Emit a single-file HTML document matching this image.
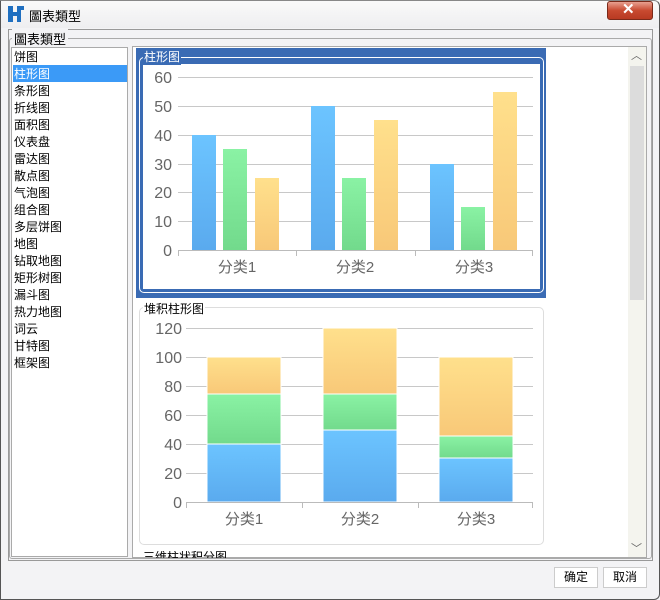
<!DOCTYPE html>
<html><head><meta charset="utf-8"><style>
*{margin:0;padding:0;box-sizing:border-box}
body{width:660px;height:600px;overflow:hidden;background:#f3f3f5;font-family:"Liberation Sans","Noto Sans CJK SC",sans-serif;font-size:12px;color:#000;position:relative}
.a{position:absolute}
.li{position:absolute;left:14px;font-size:12px;line-height:17px}
</style></head><body>
<div class="a" style="left:0;top:0;width:660px;height:28px;background:linear-gradient(#fafafa,#eeeef0)"></div>
<div class="a" style="left:0;top:0;width:660px;height:600px;border:1px solid #555;border-top-color:#888;border-radius:0 6px 6px 0"></div>
<svg class="a" style="left:7px;top:5px" width="18" height="18"><path d="M1 1h5v16h-5z M6 7h4v4h-4z M10 1h7v4h-3v12h-4z" fill="#1f6fc0"/></svg>
<div class="a" style="left:29px;top:6px;font-size:13px">圖表類型</div>
<div class="a" style="left:607px;top:1px;width:46px;height:19px;border-radius:3px;background:linear-gradient(#e8a090,#c84a30 50%,#b83a22);border:1px solid #7a2a1a"></div>
<div class="a" style="left:622px;top:0px;color:#fff;font-size:15px;font-weight:bold">✕</div>
<div class="a" style="left:8px;top:29px;width:645px;height:532px;border:1px solid #999"></div>
<div class="a" style="left:9px;top:38px;width:643px;height:521px;border:1px solid #aaa;border-radius:3px"></div>
<div class="a" style="left:12px;top:29px;background:#f3f3f5;padding:0 2px;font-size:13px">圖表類型</div>
<div class="a" style="left:11px;top:47px;width:117px;height:510px;background:#fff;border:1px solid #aaa"></div>
<div class="a" style="left:13px;top:65px;width:114px;height:17px;background:#3b9af7"></div>
<div class="li" style="top:49px">饼图</div>
<div class="li" style="top:66px;color:#fff">柱形图</div>
<div class="li" style="top:83px">条形图</div>
<div class="li" style="top:100px">折线图</div>
<div class="li" style="top:117px">面积图</div>
<div class="li" style="top:134px">仪表盘</div>
<div class="li" style="top:151px">雷达图</div>
<div class="li" style="top:168px">散点图</div>
<div class="li" style="top:185px">气泡图</div>
<div class="li" style="top:202px">组合图</div>
<div class="li" style="top:219px">多层饼图</div>
<div class="li" style="top:236px">地图</div>
<div class="li" style="top:253px">钻取地图</div>
<div class="li" style="top:270px">矩形树图</div>
<div class="li" style="top:287px">漏斗图</div>
<div class="li" style="top:304px">热力地图</div>
<div class="li" style="top:321px">词云</div>
<div class="li" style="top:338px">甘特图</div>
<div class="li" style="top:355px">框架图</div>
<div class="a" style="left:132px;top:46px;width:515px;height:512px;background:#fff;border:1px solid #aaa"></div>
<div class="a" style="left:628px;top:47px;width:18px;height:510px;background:#f4f4ee"></div>
<div class="a" style="left:630px;top:66px;width:14px;height:234px;background:#dcdcdc"></div>
<div class="a" style="left:631px;top:47px;color:#666;font-size:11px">︿</div>
<div class="a" style="left:631px;top:540px;color:#666;font-size:11px">﹀</div>
<div class="a" style="left:136px;top:48px;width:410px;height:250px;background:#3a6bb4"></div>
<div class="a" style="left:139px;top:57px;width:405px;height:236px;border:1px solid #fff;border-radius:5px;"></div>
<div class="a" style="left:143px;top:64px;width:397px;height:225px;background:#fff"></div>
<div class="a" style="left:143px;top:48px;color:#fff;background:#3a6bb4;padding:0 1px">柱形图</div>
<div class="a" style="left:139px;top:307px;width:405px;height:238px;border:1px solid #ddd;border-radius:5px"></div>
<div class="a" style="left:143px;top:300px;background:#fff;padding:0 1px">堆积柱形图</div>
<div class="a" style="left:143px;top:551px;height:7px;overflow:hidden;line-height:12px">三维柱状积分图</div>
<svg class="a" style="left:0;top:0" width="660" height="600" font-family="Liberation Sans,Noto Sans CJK SC,sans-serif">
<defs>
<linearGradient id="b" x1="0" y1="0" x2="0" y2="1"><stop offset="0" stop-color="#6cc4ff"/><stop offset="1" stop-color="#5aaaee"/></linearGradient>
<linearGradient id="g" x1="0" y1="0" x2="0" y2="1"><stop offset="0" stop-color="#8af2a4"/><stop offset="1" stop-color="#72da8c"/></linearGradient>
<linearGradient id="y" x1="0" y1="0" x2="0" y2="1"><stop offset="0" stop-color="#ffe08c"/><stop offset="1" stop-color="#f8c878"/></linearGradient>
</defs>
<g stroke="#c8c8c8" stroke-width="1">
<path d="M178 77.5H533M178 106.5H533M178 135.5H533M178 164.5H533M178 192.5H533M178 221.5H533"/>
<path d="M186 328.5H533M186 357.5H533M186 386.5H533M186 415.5H533M186 444.5H533M186 473.5H533"/>
</g>
<g fill="#666" font-size="16" text-anchor="end">
<text x="172" y="83">60</text><text x="172" y="112">50</text><text x="172" y="141">40</text><text x="172" y="170">30</text><text x="172" y="198">20</text><text x="172" y="227">10</text><text x="172" y="256">0</text>
<text x="182" y="334">120</text><text x="182" y="363">100</text><text x="182" y="392">80</text><text x="182" y="421">60</text><text x="182" y="450">40</text><text x="182" y="479">20</text><text x="182" y="508">0</text>
</g>
<rect x="192" y="135" width="24" height="115" fill="url(#b)"/>
<rect x="223" y="149" width="24" height="101" fill="url(#g)"/>
<rect x="255" y="178" width="24" height="72" fill="url(#y)"/>
<rect x="311" y="106" width="24" height="144" fill="url(#b)"/>
<rect x="342" y="178" width="24" height="72" fill="url(#g)"/>
<rect x="374" y="120" width="24" height="130" fill="url(#y)"/>
<rect x="430" y="164" width="24" height="86" fill="url(#b)"/>
<rect x="461" y="207" width="24" height="43" fill="url(#g)"/>
<rect x="493" y="92" width="24" height="158" fill="url(#y)"/>
<path d="M178 250.5H533M178.5 250V256M296.5 250V256M415.5 250V256M532.5 250V256" stroke="#bbb"/>
<g fill="#666" font-size="15" text-anchor="middle">
<text x="237" y="272">分类1</text><text x="355" y="272">分类2</text><text x="474" y="272">分类3</text>
<text x="244" y="524">分类1</text><text x="360" y="524">分类2</text><text x="476" y="524">分类3</text>
</g>
<g stroke="#fff" stroke-width="1">
<rect x="207" y="444" width="74" height="58" fill="url(#b)"/>
<rect x="207" y="394" width="74" height="50" fill="url(#g)"/>
<rect x="207" y="357" width="74" height="37" fill="url(#y)"/>
<rect x="323" y="430" width="74" height="72" fill="url(#b)"/>
<rect x="323" y="394" width="74" height="36" fill="url(#g)"/>
<rect x="323" y="328" width="74" height="66" fill="url(#y)"/>
<rect x="439" y="458" width="74" height="44" fill="url(#b)"/>
<rect x="439" y="436" width="74" height="22" fill="url(#g)"/>
<rect x="439" y="357" width="74" height="79" fill="url(#y)"/>
</g>
<path d="M186 502.5H533M186.5 502V508M302.5 502V508M418.5 502V508M532.5 502V508" stroke="#bbb"/>
</svg>
<div class="a" style="left:554px;top:567px;width:44px;height:21px;background:#fff;border:1px solid #ccc;text-align:center;line-height:19px">确定</div>
<div class="a" style="left:603px;top:567px;width:44px;height:21px;background:#fff;border:1px solid #ccc;text-align:center;line-height:19px">取消</div>
</body></html>
